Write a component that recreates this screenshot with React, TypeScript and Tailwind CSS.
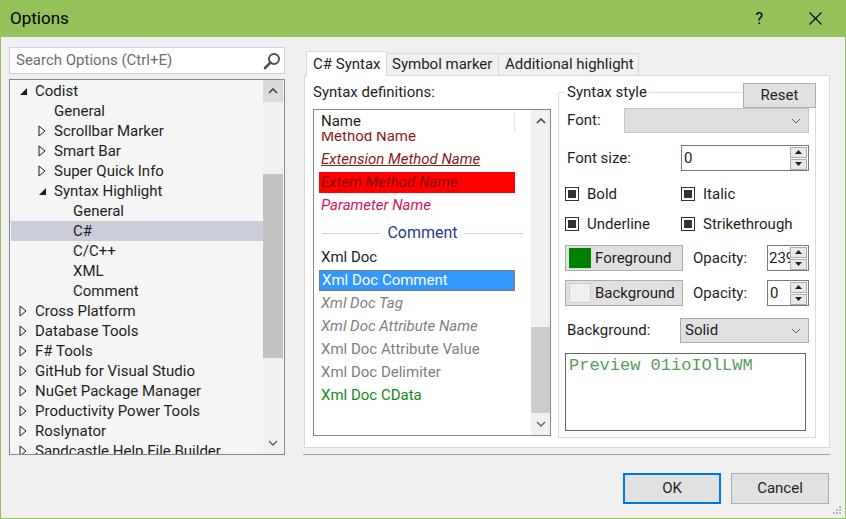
import React from 'react';

type TreeItem = {
  label: string;
  level: number;
  arrow?: 'open' | 'closed';
  selected?: boolean;
};

const treeItems: TreeItem[] = [
  { label: 'Codist', level: 0, arrow: 'open' },
  { label: 'General', level: 1 },
  { label: 'Scrollbar Marker', level: 1, arrow: 'closed' },
  { label: 'Smart Bar', level: 1, arrow: 'closed' },
  { label: 'Super Quick Info', level: 1, arrow: 'closed' },
  { label: 'Syntax Highlight', level: 1, arrow: 'open' },
  { label: 'General', level: 2 },
  { label: 'C#', level: 2, selected: true },
  { label: 'C/C++', level: 2 },
  { label: 'XML', level: 2 },
  { label: 'Comment', level: 2 },
  { label: 'Cross Platform', level: 0, arrow: 'closed' },
  { label: 'Database Tools', level: 0, arrow: 'closed' },
  { label: 'F# Tools', level: 0, arrow: 'closed' },
  { label: 'GitHub for Visual Studio', level: 0, arrow: 'closed' },
  { label: 'NuGet Package Manager', level: 0, arrow: 'closed' },
  { label: 'Productivity Power Tools', level: 0, arrow: 'closed' },
  { label: 'Roslynator', level: 0, arrow: 'closed' },
  { label: 'Sandcastle Help File Builder', level: 0, arrow: 'closed' },
];

const indents = ['pl-[8px]', 'pl-[27px]', 'pl-[46px]'];

function ChevronUp() {
  return (
    <svg width="10" height="6" viewBox="0 0 10 6">
      <path d="M1 5 L5 1 L9 5" fill="none" stroke="#404040" strokeWidth="1.6" />
    </svg>
  );
}

function ChevronDown({ color = '#404040' }: { color?: string }) {
  return (
    <svg width="10" height="6" viewBox="0 0 10 6">
      <path d="M1 1 L5 5 L9 1" fill="none" stroke={color} strokeWidth="1.4" />
    </svg>
  );
}

function ComboChevron() {
  return (
    <svg width="10" height="6" viewBox="0 0 10 6">
      <path d="M1 1 L5 5 L9 1" fill="none" stroke="#606060" strokeWidth="1" />
    </svg>
  );
}

function TreeArrow({ kind }: { kind?: 'open' | 'closed' }) {
  if (!kind) return <span className="w-[16px]" />;
  return (
    <span className="w-[16px] flex items-center">
      {kind === 'open' ? (
        <svg width="9" height="9" viewBox="0 0 9 9">
          <path d="M8 1 L8 8 L1 8 Z" fill="#1e1e1e" />
        </svg>
      ) : (
        <svg width="8" height="12" viewBox="0 0 8 12">
          <path d="M1 1 L7 6 L1 11 Z" fill="none" stroke="#1e1e1e" strokeWidth="1" />
        </svg>
      )}
    </span>
  );
}

function Spinner() {
  return (
    <div className="w-[18px] flex flex-col justify-center gap-[1px] pr-[1px]">
      <div className="h-[11px] border border-[#adadad] bg-[#e8e8e8] flex items-center justify-center">
        <svg width="7" height="4" viewBox="0 0 7 4">
          <path d="M0 4 L3.5 0 L7 4 Z" fill="#202020" />
        </svg>
      </div>
      <div className="h-[11px] border border-[#adadad] bg-[#e8e8e8] flex items-center justify-center">
        <svg width="7" height="4" viewBox="0 0 7 4">
          <path d="M0 0 L3.5 4 L7 0 Z" fill="#202020" />
        </svg>
      </div>
    </div>
  );
}

function Checkbox({ label }: { label: string }) {
  return (
    <div className="flex items-center gap-[8px]">
      <span className="w-[14px] h-[14px] border border-[#333] bg-white flex items-center justify-center">
        <span className="w-[8px] h-[8px] bg-[#333]" />
      </span>
      <span>{label}</span>
    </div>
  );
}

type SyntaxItem = {
  label: string;
  cls: string;
  box?: string;
  sep?: boolean;
};

const syntaxItems: SyntaxItem[] = [
  { label: 'Method Name', cls: 'text-[#8b1a1a]' },
  { label: 'Extension Method Name', cls: 'text-[#8b1a1a] italic underline' },
  { label: 'Extern Method Name', cls: 'text-[#8b0000] italic', box: 'bg-[#ff0000]' },
  { label: 'Parameter Name', cls: 'text-[#d4145a] italic' },
  { label: 'Comment', cls: '', sep: true },
  { label: 'Xml Doc', cls: 'text-[#1e1e1e]' },
  { label: 'Xml Doc Comment', cls: 'text-white', box: 'bg-[#3399ff] border border-dotted border-[#c06000]' },
  { label: 'Xml Doc Tag', cls: 'text-[#808080] italic' },
  { label: 'Xml Doc Attribute Name', cls: 'text-[#808080] italic' },
  { label: 'Xml Doc Attribute Value', cls: 'text-[#808080]' },
  { label: 'Xml Doc Delimiter', cls: 'text-[#808080]' },
  { label: 'Xml Doc CData', cls: 'text-[#168a16]' },
];

export default function App() {
  return (
    <div className="w-[846px] h-[519px] bg-[#f0f0f0] border-x border-b border-[#93c25b] flex flex-col font-['Roboto',sans-serif] text-[15px] text-[#1e1e1e] overflow-hidden">
      {/* title bar */}
      <div className="h-[37px] bg-[#93c25b] flex items-center pl-[9px] shrink-0">
        <span className="text-[17px] text-black">Options</span>
        <span className="ml-auto mr-[46px] text-[16px] text-black">?</span>
        <span className="mr-[23px] flex items-center">
          <svg width="13" height="13" viewBox="0 0 13 13">
            <path d="M0.5 0.5 L12.5 12.5 M12.5 0.5 L0.5 12.5" stroke="#000" strokeWidth="1.1" />
          </svg>
        </span>
      </div>

      <div className="flex-1 flex pt-[10px] relative">
        {/* left column */}
        <div className="ml-[8px] w-[276px] flex flex-col">
          <div className="h-[27px] bg-white border border-[#ccd0e4] flex items-center pl-[6px] pr-[3px]">
            <span className="text-[#6d6d6d]">Search Options (Ctrl+E)</span>
            <span className="ml-auto flex items-center">
              <svg width="18" height="18" viewBox="0 0 18 18">
                <circle cx="11" cy="7" r="5" fill="none" stroke="#505050" strokeWidth="2" />
                <path d="M7.5 10.5 L2 16" stroke="#505050" strokeWidth="2.6" strokeLinecap="round" />
              </svg>
            </span>
          </div>
          <div className="mt-[5px] h-[376px] border border-[#828790] bg-[#f5f5f5] flex overflow-hidden">
            <div className="flex-1 pt-[1px] pl-[1px] overflow-hidden">
              {treeItems.map((item, i) => (
                <div
                  key={i}
                  className={`h-[20px] flex items-center whitespace-nowrap ${indents[item.level]} ${
                    item.selected ? 'bg-[#cbcdd9]' : ''
                  }`}
                >
                  <TreeArrow kind={item.arrow} />
                  <span>{item.label}</span>
                </div>
              ))}
            </div>
            <div className="w-[20px] mr-[1px] bg-[#f0f0f0] flex flex-col">
              <div className="h-[22px] bg-[#dadada] flex items-center justify-center">
                <ChevronUp />
              </div>
              <div className="mt-[72px] h-[184px] bg-[#c2c2c2]" />
              <div className="mt-auto h-[22px] flex items-center justify-center">
                <ChevronDown color="#606060" />
              </div>
            </div>
          </div>
        </div>

        {/* right column */}
        <div className="ml-[19px] w-[526px] flex flex-col">
          <div className="pt-[4px] pl-[2px] flex items-end h-[28px] relative z-10">
            <div className="w-[81px] bg-white border border-b-0 border-[#d9d9d9] pl-[6px] flex items-center mb-[-1px] h-[25px]">
              C# Syntax
            </div>
            <div className="h-[22px] w-[112px] bg-[#f0f0f0] border border-l-0 border-b-0 border-[#d9d9d9] flex items-center pl-[5px]">
              Symbol marker
            </div>
            <div className="h-[22px] w-[140px] bg-[#f0f0f0] border border-l-0 border-b-0 border-[#d9d9d9] flex items-center pl-[6px]">
              Additional highlight
            </div>
          </div>

          {/* tab panel */}
          <div className="h-[373px] border border-[#d9d9d9] bg-white flex">
            <div className="ml-[8px] w-[238px] flex flex-col">
              <div className="mt-[7px] h-[18px] leading-[18px]">Syntax definitions:</div>
              <div className="mt-[8px] h-[327px] border border-[#828790] bg-white flex">
                <div className="flex-1 flex flex-col overflow-hidden">
                  <div className="h-[22px] flex shrink-0 relative z-10 bg-white">
                    <div className="w-[201px] pl-[7px] flex items-center border-r border-[#e5e5e5] mt-[1px]">Name</div>
                  </div>
                  <div className="flex-1 overflow-hidden">
                    <div className="mt-[-7px]">
                      {syntaxItems.map((it, i) =>
                        it.sep ? (
                          <div key={i} className="h-[29px] flex items-center px-[8px] gap-[6px] pt-[3px]">
                            <span className="flex-1 h-[1px] bg-[#c9d3ec]" />
                            <span className="text-[#1f3a93] text-[16px]">{it.label}</span>
                            <span className="flex-1 h-[1px] bg-[#c9d3ec]" />
                          </div>
                        ) : (
                          <div key={i} className="h-[23px] px-[5px] py-[1px] w-[206px]">
                            <div className={`h-full flex items-center px-[2px] whitespace-nowrap ${it.box ?? ''}`}>
                              <span className={it.cls}>{it.label}</span>
                            </div>
                          </div>
                        )
                      )}
                    </div>
                  </div>
                </div>
                <div className="w-[19px] bg-[#f0f0f0] flex flex-col">
                  <div className="h-[22px] flex items-center justify-center">
                    <ChevronUp />
                  </div>
                  <div className="mt-[195px] h-[86px] bg-[#cdcdcd]" />
                  <div className="mt-auto h-[22px] flex items-center justify-center">
                    <ChevronDown color="#606060" />
                  </div>
                </div>
              </div>
            </div>

            {/* syntax style group */}
            <fieldset className="ml-[7px] mt-[7px] w-[257px] h-[355px] border border-[#dcdcdc] relative px-[6px]">
              <legend className="px-[2px] h-[18px] leading-[18px]">Syntax style</legend>
              <button className="absolute right-[-1px] top-[-18px] w-[73px] h-[25px] bg-[#e1e1e1] border border-[#adadad] flex items-center justify-center">
                Reset
              </button>
              <div className="mt-[7px] flex items-center">
                <span className="ml-[2px] w-[57px]">Font:</span>
                <div className="w-[185px] h-[25px] bg-[#dfdfdf] border border-[#c6c6c6] flex items-center justify-end pr-[7px]">
                  <ComboChevron />
                </div>
              </div>
              <div className="mt-[12px] flex items-center">
                <span className="ml-[2px] w-[114px]">Font size:</span>
                <div className="w-[128px] h-[26px] bg-white border border-[#7a7a7a] flex">
                  <span className="flex-1 pl-[2px] leading-[24px]">0</span>
                  <Spinner />
                </div>
              </div>
              <div className="mt-[13px] h-[20px] flex items-center">
                <div className="w-[116px]">
                  <Checkbox label="Bold" />
                </div>
                <Checkbox label="Italic" />
              </div>
              <div className="mt-[10px] h-[20px] flex items-center">
                <div className="w-[116px]">
                  <Checkbox label="Underline" />
                </div>
                <Checkbox label="Strikethrough" />
              </div>
              <div className="mt-[11px] flex items-center">
                <div className="w-[118px] h-[26px] bg-[#e1e1e1] border border-[#adadad] flex items-center pl-[3px] gap-[4px]">
                  <span className="w-[22px] h-[20px] bg-[#008000]" />
                  <span>Foreground</span>
                </div>
                <span className="ml-[10px] w-[74px]">Opacity:</span>
                <div className="w-[42px] h-[26px] bg-white border border-[#7a7a7a] flex">
                  <span className="flex-1 pl-[1px] leading-[24px] overflow-hidden whitespace-nowrap">239</span>
                  <Spinner />
                </div>
              </div>
              <div className="mt-[9px] flex items-center">
                <div className="w-[118px] h-[26px] bg-[#e1e1e1] border border-[#adadad] flex items-center pl-[3px] gap-[4px]">
                  <span className="w-[22px] h-[20px] bg-[#f0f0f0] border border-[#cfcfcf]" />
                  <span>Background</span>
                </div>
                <span className="ml-[10px] w-[74px]">Opacity:</span>
                <div className="w-[42px] h-[26px] bg-white border border-[#7a7a7a] flex">
                  <span className="flex-1 pl-[2px] leading-[24px]">0</span>
                  <Spinner />
                </div>
              </div>
              <div className="mt-[12px] flex items-center">
                <span className="ml-[2px] w-[113px]">Background:</span>
                <div className="w-[129px] h-[25px] bg-[#e1e1e1] border border-[#adadad] flex items-center pl-[4px] pr-[7px]">
                  <span>Solid</span>
                  <span className="ml-auto flex items-center">
                    <ComboChevron />
                  </span>
                </div>
              </div>
              <div className="mt-[10px] w-[241px] h-[78px] bg-white border border-[#646464] pl-[3px] leading-[22px]">
                <span className="font-['Liberation_Mono',monospace] text-[17px] text-[#5b9b5b]">Preview 01ioIOlLWM</span>
              </div>
            </fieldset>
          </div>

          <div className="mt-[6px] -ml-[1px] h-[1px] bg-[#a0a0a0]" />

          <div className="mt-[18px] flex justify-end gap-[10px] pr-[1px]">
            <button className="w-[98px] h-[31px] bg-[#e1e1e1] border-2 border-[#0078d7] flex items-center justify-center">
              OK
            </button>
            <button className="w-[98px] h-[31px] bg-[#e1e1e1] border border-[#adadad] flex items-center justify-center">
              Cancel
            </button>
          </div>
        </div>

        {/* resize grip */}
        <div className="absolute right-[3px] bottom-[3px]">
          <svg width="10" height="10" viewBox="0 0 10 10">
            <rect x="7" y="1" width="2" height="2" fill="#b8b8b8" />
            <rect x="4" y="4" width="2" height="2" fill="#b8b8b8" />
            <rect x="7" y="4" width="2" height="2" fill="#b8b8b8" />
            <rect x="1" y="7" width="2" height="2" fill="#b8b8b8" />
            <rect x="4" y="7" width="2" height="2" fill="#b8b8b8" />
            <rect x="7" y="7" width="2" height="2" fill="#b8b8b8" />
          </svg>
        </div>
      </div>
    </div>
  );
}
